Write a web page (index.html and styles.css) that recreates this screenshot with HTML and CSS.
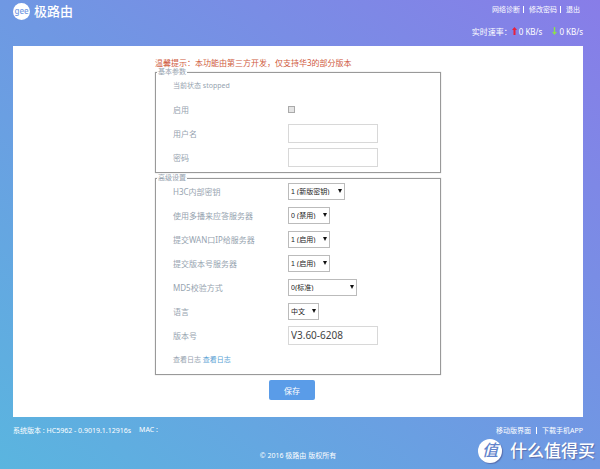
FILE: index.html
```html
<!DOCTYPE html>
<html lang="zh-CN">
<head>
  <meta charset="UTF-8" />
  <meta name="viewport" content="width=device-width, initial-scale=1.0"/>
  <title>极路由</title>
  <link rel="stylesheet" href="styles.css">
</head>
<body>
  <header class="header">
    <a class="logo" href="#">
      <span class="logo-icon">gee</span>
      <span>极路由</span>
    </a>
    <div class="header-right">
      <nav class="nav">
        <a href="#">网络诊断</a><i></i><a href="#">修改密码</a><i></i><a href="#">退出</a>
      </nav>
      <div class="speed">
        <span>实时速率：</span>
        <svg class="arrow" viewBox="0 0 5 8" fill="#e8203c"><path d="M2.5 0 5 3H3.5v5h-2V3H0z"/></svg>
        <span class="up">0 KB/s</span>
        <svg class="arrow" viewBox="0 0 5 8" fill="#8be04e"><path d="M2.5 8 5 5H3.2V0H1.8v5H0z"/></svg>
        <span>0 KB/s</span>
      </div>
    </div>
  </header>

  <main class="panel">
    <form class="form">
      <p class="tip">温馨提示：本功能由第三方开发，仅支持华3的部分版本</p>

      <fieldset>
        <legend>基本参数</legend>
        <div class="row small">当前状态 stopped</div>
        <div class="row">
          <label for="enable">启用</label>
          <input type="checkbox" id="enable">
        </div>
        <div class="row">
          <label for="user">用户名</label>
          <input type="text" id="user">
        </div>
        <div class="row">
          <label for="pass">密码</label>
          <input type="password" id="pass">
        </div>
      </fieldset>

      <fieldset>
        <legend>高级设置</legend>
        <div class="row">
          <label for="key">H3C内部密钥</label>
          <div class="select wide">
            <select id="key"><option>1 (新版密钥)</option></select>
          </div>
        </div>
        <div class="row">
          <label for="multicast">使用多播来应答服务器</label>
          <div class="select">
            <select id="multicast"><option>0 (禁用)</option><option>1 (启用)</option></select>
          </div>
        </div>
        <div class="row">
          <label for="wanip">提交WAN口IP给服务器</label>
          <div class="select">
            <select id="wanip"><option>1 (启用)</option><option>0 (禁用)</option></select>
          </div>
        </div>
        <div class="row">
          <label for="sendver">提交版本号服务器</label>
          <div class="select">
            <select id="sendver"><option>1 (启用)</option><option>0 (禁用)</option></select>
          </div>
        </div>
        <div class="row">
          <label for="md5">MD5校验方式</label>
          <div class="select widest">
            <select id="md5"><option>0(标准)</option></select>
          </div>
        </div>
        <div class="row">
          <label for="lang">语言</label>
          <div class="select narrow">
            <select id="lang"><option>中文</option></select>
          </div>
        </div>
        <div class="row">
          <label for="version">版本号</label>
          <input type="text" id="version" value="V3.60-6208">
        </div>
        <div class="row small">查看日志&nbsp;<a href="#">查看日志</a></div>
      </fieldset>

      <button type="button" class="save">保存</button>
    </form>
  </main>

  <footer class="footer">
    <div class="footer-top">
      <div class="system"><span>系统版本 : HC5962 - 0.9019.1.12916s</span><span>MAC :</span></div>
      <div class="links"><a href="#">移动版界面</a><i></i><a href="#">下载手机APP</a></div>
    </div>
    <p class="copyright">© 2016 极路由 版权所有</p>
  </footer>

  <div class="watermark">
    <span class="badge">值</span>
    <span>什么值得买</span>
  </div>
</body>
</html>
```

FILE: styles.css
```css
:root {
  --label-color: #96a3af;
  --link-color: #5a9fd4;
  --border-color: #999;
  --input-border: #d8d8d8;
  --accent-color: #5a9ce8;
  --font-family: "Noto Sans", "Noto Sans CJK SC", sans-serif;
}

* {
  box-sizing: border-box;
}

body {
  margin: 0;
  padding: 0 17px 0 13px;
  min-height: 100vh;
  position: relative;
  background: linear-gradient(to top right, #5ab5df, #6f98e3 50%, #887de8);
  color: #fff;
  font-family: var(--font-family);
  font-size: 7px;
}

a {
  color: inherit;
  text-decoration: none;
}

p {
  margin: 0;
}

.header {
  display: flex;
  justify-content: space-between;
  align-items: flex-start;
  height: 46px;
  padding-top: 3px;
}

.logo {
  display: flex;
  align-items: center;
  gap: 4px;
  height: 17px;
  font-size: 13px;
  line-height: 17px;
  font-weight: 500;
}

.logo-icon {
  width: 17px;
  height: 17px;
  border-radius: 50%;
  background: #fff;
  color: #7298e2;
  font-size: 8px;
  line-height: 15px;
  text-align: center;
}

.header-right {
  display: flex;
  flex-direction: column;
  align-items: flex-end;
  gap: 10px;
}

.nav {
  display: flex;
  align-items: center;
  height: 12px;
  padding-right: 3px;
}

.nav i,
.links i {
  width: 1px;
  height: 7px;
  background: #fff;
}

.nav i {
  margin: 0 5px 0 3px;
}

.speed {
  display: flex;
  align-items: center;
  height: 12px;
  font-size: 8px;
}

.arrow {
  width: 5px;
  height: 8px;
  margin-right: 2px;
}

.up {
  margin-right: 10px;
}

.panel {
  padding: 12px 0 17px;
  background: #fff;
}

.form {
  width: 50%;
  min-width: 286px;
  margin: 0 auto;
  color: var(--label-color);
}

.tip {
  color: #cf5b3e;
  font-size: 8px;
  line-height: 10px;
}

fieldset {
  margin: 0 0 1px;
  padding: 0 17px 3px;
  border: 1px solid var(--border-color);
  box-shadow: 0 0 1px #bbb;
}

legend {
  margin: 0 0 -3px -16px;
  padding: 0 1px;
  line-height: 8px;
}

.row {
  display: flex;
  align-items: center;
  height: 24px;
  font-size: 8px;
}

.row label {
  width: 115px;
}

.small {
  font-size: 7px;
}

.small a {
  color: var(--link-color);
}

input[type="text"],
input[type="password"] {
  width: 90px;
  height: 19px;
  padding: 0 2px;
  border: 1px solid var(--input-border);
  background: #fff;
  color: #444;
  font-family: inherit;
  font-size: 10px;
}

input[type="checkbox"] {
  appearance: none;
  width: 7px;
  height: 7px;
  margin: 0;
  border: 1px solid #aaa;
  background: #e4e4e4;
}

.select {
  position: relative;
  width: 42px;
}

.select.narrow {
  width: 31px;
}

.select.wide {
  width: 57px;
}

.select.widest {
  width: 69px;
}

.select select {
  appearance: none;
  display: block;
  width: 100%;
  height: 17px;
  padding: 0 2px;
  border: 1px solid #bbb;
  border-radius: 0;
  background: #fff;
  color: #222;
  font-family: "Liberation Sans", "Noto Sans CJK SC", sans-serif;
  font-size: 7px;
}

.select::after {
  content: "";
  position: absolute;
  top: 6px;
  right: 3px;
  border: 2px solid transparent;
  border-top: 4px solid #111;
  border-bottom: 0;
  pointer-events: none;
}

.save {
  display: block;
  width: 46px;
  height: 20px;
  margin: 5px 0 0 114px;
  padding: 0;
  border: none;
  border-radius: 2px;
  background: var(--accent-color);
  color: #fff;
  font-family: inherit;
  font-size: 8px;
  cursor: pointer;
}

.footer-top {
  display: flex;
  justify-content: space-between;
  align-items: center;
  height: 26px;
}

.system {
  display: flex;
  gap: 8px;
}

.links {
  display: flex;
  align-items: center;
}

.links i {
  margin: 0 5px;
}

.copyright {
  padding: 8px 0;
  text-align: center;
  line-height: 10px;
}

.watermark {
  position: absolute;
  right: 5px;
  bottom: 6px;
  display: flex;
  align-items: center;
  gap: 8px;
  font-size: 17px;
  line-height: 24px;
  font-weight: 500;
  text-shadow: 1px 1px 1px #5a6fae;
}

.badge {
  width: 24px;
  height: 24px;
  border-radius: 50%;
  background: #fff;
  box-shadow: 1px 1px 1px #5a6fae;
  color: #5f84cc;
  font-size: 16px;
  line-height: 22px;
  font-style: italic;
  text-align: center;
  text-shadow: none;
}
```
